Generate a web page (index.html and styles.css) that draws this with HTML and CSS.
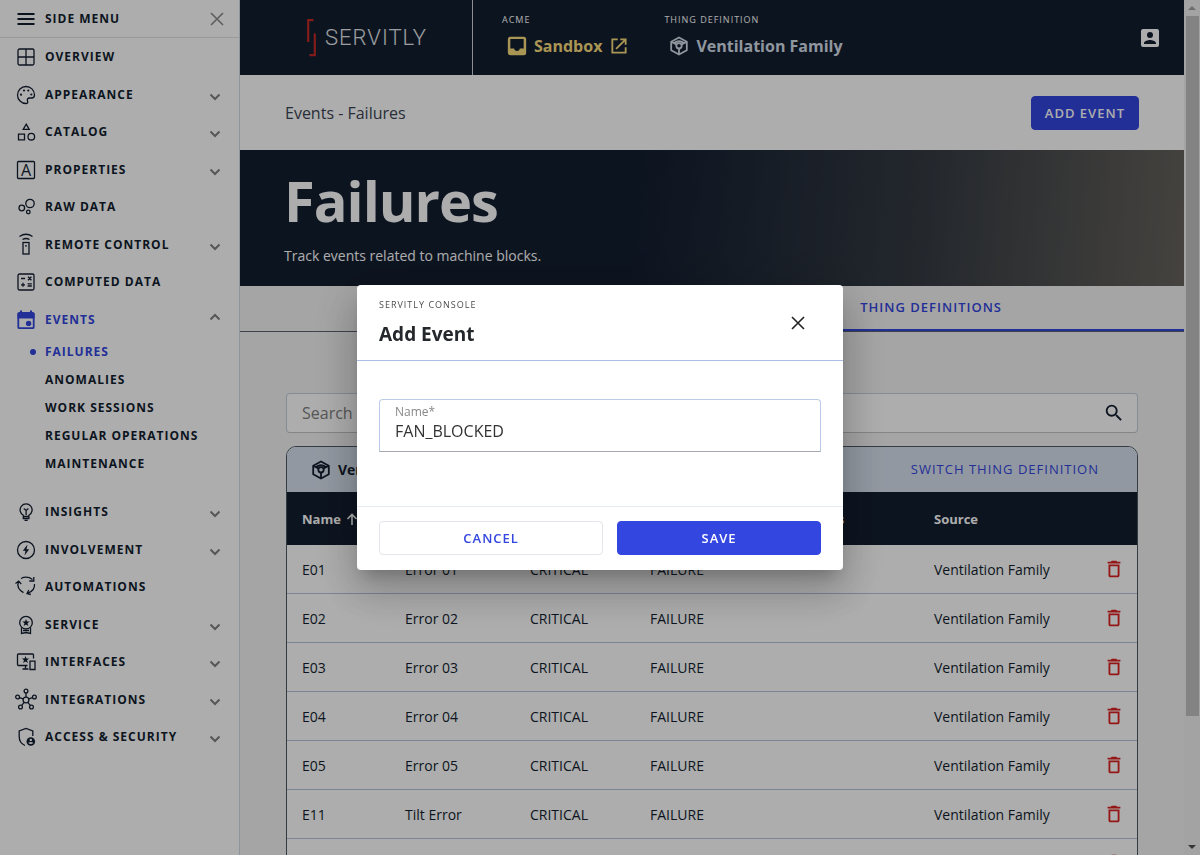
FILE: index.html
```html
<!DOCTYPE html>
<html lang="en">
<head>
  <meta charset="UTF-8">
  <meta name="viewport" content="width=device-width, initial-scale=1">
  <title>Failures - Servitly Console</title>
  <link rel="stylesheet" href="styles.css">
</head>
<body>
  <!-- shared icons -->
  <svg class="sprite" aria-hidden="true">
    <symbol id="chevron" viewBox="0 0 12 12"><path d="M1.500 3.500 6 8l4.500-4.500" fill="none" stroke="currentColor" stroke-width="2"/></symbol>
    <symbol id="close" viewBox="0 0 14 14"><path d="M1 1l12 12M13 1L1 13" fill="none" stroke="currentColor" stroke-width="1.600"/></symbol>
    <symbol id="cube" viewBox="0 0 20 20">
      <g fill="none" stroke="currentColor" stroke-width="1.800" stroke-linejoin="round">
        <path d="M10 1.500l7.800 4.300v8.400L10 18.500l-7.800-4.300V5.800z"/>
        <circle cx="10" cy="9.800" r="2.700"/>
        <path d="M2.500 6l5 2.500M17.500 6l-5 2.500M10 12.500v5.500M5 7Q10 3.500 15 7"/>
      </g>
    </symbol>
    <symbol id="trash" viewBox="0 0 24 24"><path fill="currentColor" fill-rule="evenodd" d="M6 19c0 1.100.9 2 2 2h8c1.100 0 2-.9 2-2V7H6v12zM8 9h8v10H8V9zm7.500-5l-1-1h-5l-1 1H5v2h14V4z"/></symbol>
  </svg>

  <div class="app">
    <nav class="sidebar">
      <div class="sidebar-head">
        <svg class="icon" viewBox="0 0 22 22"><path d="M2.500 6h17M2.500 11h17M2.500 16h17" stroke-width="2"/></svg>
        <span>SIDE MENU</span>
        <button class="sidebar-close" aria-label="Close menu"><svg><use href="#close"/></svg></button>
      </div>
      <ul class="menu">
        <li><a href="#">
          <svg class="icon" viewBox="0 0 22 22"><rect x="3" y="3" width="16" height="16" rx="1.500"/><path d="M11 3v16M3 11h16"/></svg>
          OVERVIEW</a></li>
        <li><a href="#">
          <svg class="icon" viewBox="0 0 22 22"><path d="M11 2.500a8.500 8.500 0 1 0 0 17c1.500 0 2.100-1.100 1.600-2.300-.8-1.800.1-3.200 2-3.200h2.100c1.800 0 2.800-1.300 2.800-3C19.500 6 15.500 2.500 11 2.500z"/><g class="solid"><circle cx="6" cy="10.700" r="1.100"/><circle cx="9" cy="6.500" r="1.100"/><circle cx="13.300" cy="6.500" r="1.100"/><circle cx="16.300" cy="10.500" r="1.100"/></g></svg>
          APPEARANCE<svg class="chevron"><use href="#chevron"/></svg></a></li>
        <li><a href="#">
          <svg class="icon" viewBox="0 0 22 22"><path d="M11.200 3.200l3 5.100h-6zM3.500 13.200h6v5.600h-6z"/><circle cx="16.300" cy="15.700" r="3.300"/></svg>
          CATALOG<svg class="chevron"><use href="#chevron"/></svg></a></li>
        <li><a href="#">
          <svg class="icon" viewBox="0 0 22 22"><rect x="2.500" y="2.500" width="17" height="17" rx="1"/><text x="11" y="17" text-anchor="middle">A</text></svg>
          PROPERTIES<svg class="chevron"><use href="#chevron"/></svg></a></li>
        <li><a href="#">
          <svg class="icon" viewBox="0 0 22 22"><circle cx="15" cy="7.500" r="4.200"/><circle cx="6.800" cy="12" r="2.800"/><circle cx="13.300" cy="16" r="1.800"/></svg>
          RAW DATA</a></li>
        <li><a href="#">
          <svg class="icon" viewBox="0 0 22 22"><rect x="8" y="8.500" width="6" height="11.500"/><path d="M4.500 2.500q6.500-4.500 13 0M7.500 5.500q3.500-2 7 0"/><circle class="solid" cx="11" cy="11.800" r=".9"/></svg>
          REMOTE CONTROL<svg class="chevron"><use href="#chevron"/></svg></a></li>
        <li><a href="#">
          <svg class="icon" viewBox="0 0 22 22"><rect x="3" y="3" width="16" height="16" rx="1.500"/><path d="M6 7.500h4M13 5.800l3.400 3.400M16.400 5.800L13 9.200M6 13.800h4M8 11.800v4M12.600 12.800h4.200M12.600 15h4.200"/></svg>
          COMPUTED DATA</a></li>
        <li class="open"><a href="#">
          <svg class="icon" viewBox="0 0 22 22"><rect x="3.300" y="4" width="15.400" height="15.200" rx="1" stroke-width="1.800"/><path class="solid" d="M2.500 4h17v5.500h-17zM5 1.500h2V5H5zM15 1.500h2V5h-2z"/><circle class="solid" cx="13.600" cy="14.400" r="2.700"/></svg>
          EVENTS<svg class="chevron"><use href="#chevron"/></svg></a>
          <ul class="submenu">
            <li class="current"><a href="#">FAILURES</a></li>
            <li><a href="#">ANOMALIES</a></li>
            <li><a href="#">WORK SESSIONS</a></li>
            <li><a href="#">REGULAR OPERATIONS</a></li>
            <li><a href="#">MAINTENANCE</a></li>
          </ul>
        </li>
        <li><a href="#">
          <svg class="icon" viewBox="0 0 22 22"><path d="M8.300 14.200A6 6 0 1 1 13.900 14.200V17.500H8.300zM8.300 15.500h5.600M11.100 14V9.500M8.800 7.500l2.300 2 2.300-2M9.500 19.300h3.200"/></svg>
          INSIGHTS<svg class="chevron"><use href="#chevron"/></svg></a></li>
        <li><a href="#">
          <svg class="icon" viewBox="0 0 22 22"><circle cx="11" cy="11" r="8.500"/><path class="solid" d="M12.500 5.500l-4.700 6.200h2.700l-1 4.800 4.700-6.300h-2.700z"/></svg>
          INVOLVEMENT<svg class="chevron"><use href="#chevron"/></svg></a></li>
        <li><a href="#">
          <svg class="icon" viewBox="0 0 22 22"><path d="M6 2.500Q12-.5 17.500 3.500M18.800 1v4h-4.500M19.500 8q.5 6.500-6.500 9.200M15.800 18.500L12 17.500l1.800-3.500M8.500 16.600Q1 12.500 3.500 5.500M.5 7.500l3.200-2.400 2.600 3"/></svg>
          AUTOMATIONS</a></li>
        <li><a href="#">
          <svg class="icon" viewBox="0 0 22 22"><circle cx="11" cy="8.700" r="6.300"/><path d="M6.500 13.500v6l4.500-1 4.500 1v-6M8 16.500h6"/><path class="solid" d="M11 5l1 2.600h2.700l-2.200 1.700.9 2.700-2.400-1.600L8.600 12l.9-2.700-2.200-1.700H10z"/></svg>
          SERVICE<svg class="chevron"><use href="#chevron"/></svg></a></li>
        <li><a href="#">
          <svg class="icon" viewBox="0 0 22 22"><path d="M12.500 14.500h-9a1 1 0 0 1-1-1V4a1 1 0 0 1 1-1h14a1 1 0 0 1 1 1v3.500M10.500 14.500v3M7.500 18h6M15 10.200h5v8.300h-5z"/><path class="solid" d="M10.500 5l1 2.600h2.700L12 9.300l.9 2.700-2.400-1.600L8.100 12 9 9.300 6.800 7.600h2.700z"/></svg>
          INTERFACES<svg class="chevron"><use href="#chevron"/></svg></a></li>
        <li><a href="#">
          <svg class="icon" viewBox="0 0 22 22"><circle cx="11" cy="11" r="2.900"/><circle cx="11" cy="2" r="1.900"/><circle cx="2.600" cy="8" r="1.900"/><circle cx="19.400" cy="8" r="1.900"/><circle cx="5.500" cy="18" r="1.900"/><circle cx="16.500" cy="18" r="1.900"/><path d="M11 4v4M4.500 8.600l3.700 1.300M17.500 8.600l-3.700 1.300M6.700 16.400l2.500-3M15.300 16.400l-2.500-3"/></svg>
          INTEGRATIONS<svg class="chevron"><use href="#chevron"/></svg></a></li>
        <li><a href="#">
          <svg class="icon" viewBox="0 0 22 22"><path d="M10 19.500Q4.200 17 4.200 10.500V5L11 2.500 17.800 5v5"/><circle class="solid" cx="15.800" cy="15.500" r="4.300"/><circle class="hole" cx="15.800" cy="13.900" r="1.200"/><path class="hole" d="M13.200 17q2.600-2 5.200 0-2.600 2-5.200 0z"/></svg>
          ACCESS &amp; SECURITY<svg class="chevron"><use href="#chevron"/></svg></a></li>
      </ul>
    </nav>

    <div class="main">
      <header class="topbar">
        <a class="logo" href="#">
          <svg viewBox="0 0 12 38"><path d="M7.500 1.200H2.200V23M3.500 36.200h5.300V14.500" fill="none" stroke="currentColor" stroke-width="2.200"/></svg>
          <span>SERVITLY</span>
        </a>
        <div class="context">
          <span class="context-label">ACME</span>
          <a class="context-value tenant" href="#">
            <svg viewBox="0 0 24 24"><path fill="currentColor" fill-rule="evenodd" d="M4 1h16a3 3 0 0 1 3 3v16a3 3 0 0 1-3 3H4a3 3 0 0 1-3-3V4a3 3 0 0 1 3-3zm0 2.500V15h4.500q.5 3 3.500 3t3.500-3H20V3.500z"/></svg>
            Sandbox
            <svg viewBox="0 0 24 24"><path d="M10.500 4H4v16h16v-6.500M13.500 4H20v6.500M20 4L8.500 15.500" fill="none" stroke="currentColor" stroke-width="2.200"/></svg>
          </a>
        </div>
        <div class="context">
          <span class="context-label">THING DEFINITION</span>
          <a class="context-value" href="#"><svg><use href="#cube"/></svg>Ventilation Family</a>
        </div>
        <button class="account" aria-label="Account">
          <svg viewBox="0 0 24 24"><path fill="currentColor" fill-rule="evenodd" d="M3 5v14a2 2 0 0 0 2 2h14a2 2 0 0 0 2-2V5a2 2 0 0 0-2-2H5a2 2 0 0 0-2 2zm12 4a3 3 0 1 1-6 0 3 3 0 0 1 6 0zm-9 8c0-2 4-3.100 6-3.100s6 1.100 6 3.100v1H6v-1z"/></svg>
        </button>
      </header>

      <div class="toolbar">
        <span class="breadcrumb">Events - Failures</span>
        <button class="btn btn-primary btn-add">ADD EVENT</button>
      </div>

      <section class="banner">
        <h1>Failures</h1>
        <p>Track events related to machine blocks.</p>
      </section>

      <div class="tabs">
        <a class="tab active" href="#">THING DEFINITIONS</a>
      </div>

      <div class="content">
        <div class="search">
          <input type="search" placeholder="Search" aria-label="Search">
          <svg viewBox="0 0 24 24"><path fill="currentColor" d="M15.500 14h-.79l-.28-.27A6.471 6.471 0 0 0 16 9.500 6.500 6.500 0 1 0 9.500 16c1.610 0 3.090-.59 4.230-1.570l.27.28v.79l5 4.990L20.490 19l-4.990-5zm-6 0C7.010 14 5 11.990 5 9.500S7.010 5 9.500 5 14 7.010 14 9.500 11.990 14 9.500 14z"/></svg>
        </div>

        <div class="card">
          <div class="card-head">
            <svg><use href="#cube"/></svg>
            <strong>Ventilation Family</strong>
            <a href="#">SWITCH THING DEFINITION</a>
          </div>
          <table>
            <colgroup>
              <col class="col-name"><col class="col-desc"><col class="col-severity"><col class="col-type"><col class="col-tags"><col><col class="col-action">
            </colgroup>
            <thead>
              <tr><th>Name <svg class="sort" viewBox="0 0 12 12"><path d="M6 12V1.500M1.500 6L6 1.500 10.500 6" fill="none" stroke="currentColor" stroke-width="1.600"/></svg></th><th>Description</th><th>Severity</th><th>Type</th><th>Tags</th><th>Source</th><th></th></tr>
            </thead>
            <tbody>
              <tr><td>E01</td><td>Error 01</td><td>CRITICAL</td><td>FAILURE</td><td></td><td>Ventilation Family</td><td><button class="delete" aria-label="Delete E01"><svg><use href="#trash"/></svg></button></td></tr>
              <tr><td>E02</td><td>Error 02</td><td>CRITICAL</td><td>FAILURE</td><td></td><td>Ventilation Family</td><td><button class="delete" aria-label="Delete E02"><svg><use href="#trash"/></svg></button></td></tr>
              <tr><td>E03</td><td>Error 03</td><td>CRITICAL</td><td>FAILURE</td><td></td><td>Ventilation Family</td><td><button class="delete" aria-label="Delete E03"><svg><use href="#trash"/></svg></button></td></tr>
              <tr><td>E04</td><td>Error 04</td><td>CRITICAL</td><td>FAILURE</td><td></td><td>Ventilation Family</td><td><button class="delete" aria-label="Delete E04"><svg><use href="#trash"/></svg></button></td></tr>
              <tr><td>E05</td><td>Error 05</td><td>CRITICAL</td><td>FAILURE</td><td></td><td>Ventilation Family</td><td><button class="delete" aria-label="Delete E05"><svg><use href="#trash"/></svg></button></td></tr>
              <tr><td>E11</td><td>Tilt Error</td><td>CRITICAL</td><td>FAILURE</td><td></td><td>Ventilation Family</td><td><button class="delete" aria-label="Delete E11"><svg><use href="#trash"/></svg></button></td></tr>
              <tr><td>&nbsp;</td><td></td><td></td><td></td><td></td><td></td><td><button class="delete" aria-label="Delete"><svg><use href="#trash"/></svg></button></td></tr>
            </tbody>
          </table>
        </div>
      </div>
    </div>

    <div class="scrollbar" aria-hidden="true">
      <span class="arrow up"></span>
      <div class="track"><div class="thumb"></div></div>
      <span class="arrow down"></span>
    </div>
  </div>

  <div class="backdrop">
    <form class="dialog" role="dialog" aria-labelledby="dialog-title">
      <div class="dialog-head">
        <div>
          <p>SERVITLY CONSOLE</p>
          <h2 id="dialog-title">Add Event</h2>
        </div>
        <button type="button" class="dialog-close" aria-label="Close"><svg><use href="#close"/></svg></button>
      </div>
      <div class="dialog-body">
        <div class="field">
          <label for="name">Name*</label>
          <input type="text" id="name" value="FAN_BLOCKED">
        </div>
      </div>
      <div class="dialog-foot">
        <button type="button" class="btn btn-outline">CANCEL</button>
        <button type="button" class="btn btn-primary">SAVE</button>
      </div>
    </form>
  </div>
</body>
</html>
```
FILE: styles.css
```css
* {
  box-sizing: border-box;
}

body {
  margin: 0;
  font-family: "Open Sans", sans-serif;
  font-size: 14px;
  line-height: 1.5;
  color: #131e30;
  overflow: hidden;
}

a {
  color: inherit;
  text-decoration: none;
}

button {
  font-family: inherit;
  cursor: pointer;
}

.sprite {
  display: none;
}

.app {
  display: flex;
  height: 100vh;
}

/* sidebar */
.sidebar {
  flex: 0 0 240px;
  background: #fff;
  border-right: 1px solid #d5dbe8;
  font-size: 12px;
  font-weight: 700;
  letter-spacing: 1px;
}

.sidebar-head {
  display: flex;
  align-items: center;
  gap: 8px;
  height: 38px;
  padding: 0 15px;
  border-bottom: 1px solid #e4e4e4;
}

.sidebar-close {
  margin-left: auto;
  padding: 0;
  border: 0;
  background: none;
  color: #8a8a8a;
}

.sidebar-close svg {
  display: block;
  width: 14px;
  height: 14px;
}

.menu, .submenu {
  list-style: none;
  margin: 0;
  padding: 0;
}

.menu > li > a {
  display: flex;
  align-items: center;
  gap: 8px;
  height: 37px;
  padding: 0 18px 0 15px;
}

.menu > li:nth-child(odd) > a {
  height: 38px;
}

.icon {
  flex: none;
  width: 22px;
  height: 22px;
  fill: none;
  stroke: currentColor;
  stroke-width: 1.3;
  overflow: visible;
}

.icon .solid {
  fill: currentColor;
  stroke: none;
}

.icon .hole {
  fill: #fff;
  stroke: none;
}

.icon text {
  font-size: 16px;
  font-weight: 400;
  letter-spacing: 0;
  fill: currentColor;
  stroke: none;
}

.chevron {
  width: 12px;
  height: 12px;
  margin: 4px 0 0 auto;
  color: #808080;
}

.open > a, .current a {
  color: #3346df;
}

.open > a .chevron {
  transform: rotate(180deg);
  margin: 0 0 6px auto;
}

.submenu {
  padding-bottom: 15px;
}

.submenu a {
  display: block;
  padding: 4px 0 4px 45px;
  line-height: 20px;
}

.current a {
  position: relative;
}

.current a::before {
  content: "";
  position: absolute;
  left: 30px;
  top: 11px;
  width: 6px;
  height: 6px;
  border-radius: 50%;
  background: #3346df;
}

/* main column */
.main {
  flex: 1;
  min-width: 0;
  overflow: hidden;
  background: #f3f3f3;
}

.topbar {
  display: flex;
  height: 75px;
  background: #131e30;
  color: #fff;
}

.logo {
  display: flex;
  align-items: center;
  gap: 7px;
  width: 233px;
  padding-left: 66px;
  border-right: 1px solid #d0d4d8;
  font-family: "Roboto", sans-serif;
  font-size: 22px;
  font-weight: 300;
  letter-spacing: 1px;
  color: #e4e6ea;
}

.logo svg {
  width: 12px;
  height: 38px;
  color: #c02a26;
}

.context {
  padding: 12px 0 0 29px;
}

.context + .context {
  padding-left: 35px;
}

.context-label {
  display: block;
  font-size: 9px;
  line-height: 16px;
  letter-spacing: 1px;
}

.context-value {
  display: flex;
  align-items: center;
  gap: 7px;
  padding: 6px 0 0 5px;
  font-size: 16px;
  font-weight: 700;
  line-height: 24px;
  color: #d5dde8;
}

.context-value svg {
  width: 20px;
  height: 20px;
}

.tenant {
  color: #fbdd7d;
}

.account {
  margin: 0 22px 0 auto;
  padding: 0;
  border: 0;
  background: none;
  color: #fff;
}

.account svg {
  display: block;
  width: 24px;
  height: 24px;
}

.toolbar {
  display: flex;
  align-items: center;
  justify-content: space-between;
  height: 75px;
  padding: 0 45px;
  background: #fff;
}

.breadcrumb {
  font-size: 16px;
  color: #3c4554;
}

.btn {
  height: 34px;
  padding: 0 13px;
  border: 1px solid #3346df;
  border-radius: 4px;
  font-size: 13px;
  font-weight: 600;
  letter-spacing: 1px;
}

.btn-primary {
  background: #3346df;
  color: #fff;
}

.btn-outline {
  background: #fff;
  border-color: #e4e4ea;
  color: #3346df;
}

.banner {
  height: 136px;
  padding: 16px 44px 0;
  background: linear-gradient(95deg, #131e30 42%, #353b43 72%, #67635d);
  color: #fff;
}

.banner h1 {
  margin: 0 0 12px;
  font-size: 56px;
  font-weight: 700;
  line-height: 68px;
  letter-spacing: -1px;
}

.banner p {
  margin: 0;
  line-height: 20px;
}

.tabs {
  display: grid;
  grid-template-columns: 13fr 15fr;
  height: 46px;
  border-bottom: 1px solid #5b6270;
}

.tab {
  grid-column: 2;
  border-bottom: 2px solid #3346df;
  font-size: 13px;
  font-weight: 600;
  line-height: 43px;
  letter-spacing: 1px;
  text-align: center;
  color: #3346df;
}

.content {
  padding: 61px 46px 0;
}

.search {
  display: flex;
  align-items: center;
  height: 40px;
  margin-bottom: 13px;
  padding: 0 12px 0 15px;
  background: #fff;
  border: 1px solid #c3cfe0;
  border-bottom-color: #c4c4c4;
  border-radius: 4px;
}

.search input {
  flex: 1;
  padding: 0;
  border: 0;
  outline: 0;
  background: none;
  font: inherit;
  font-size: 16px;
}

.search input::placeholder {
  color: #808080;
}

.search svg {
  width: 22px;
  height: 22px;
}

/* events table */
.card {
  background: #fff;
  border: 1px solid #4e5663;
  border-radius: 10px;
  overflow: hidden;
}

.card-head {
  display: flex;
  align-items: center;
  gap: 7px;
  height: 45px;
  padding: 0 38px 0 24px;
  background: #d7e1ee;
}

.card-head svg {
  width: 20px;
  height: 20px;
}

.card-head a {
  margin-left: auto;
  font-size: 13px;
  font-weight: 500;
  letter-spacing: 1px;
  color: #3346df;
}

table {
  width: 100%;
  table-layout: fixed;
  border-collapse: collapse;
}

.col-name { width: 103px; }
.col-desc { width: 125px; }
.col-severity { width: 120px; }
.col-type { width: 165px; }
.col-tags { width: 119px; }
.col-action { width: 47px; }

th, td {
  padding: 14px 0 13px 15px;
  text-align: left;
  white-space: nowrap;
}

th {
  padding: 17px 0 16px 15px;
  background: #131e30;
  color: #fff;
  font-size: 13px;
  font-weight: 700;
  line-height: 20px;
}

.sort {
  width: 12px;
  height: 12px;
  margin-left: 2px;
  vertical-align: -1px;
}

tbody tr {
  border-bottom: 1px solid #b4c3da;
}

td:last-child {
  padding: 0;
}

.delete {
  display: block;
  margin: 0 0 0 13px;
  padding: 0;
  border: 0;
  background: none;
  color: #dc2320;
}

.delete svg {
  display: block;
  width: 22px;
  height: 22px;
}

/* page scrollbar */
.scrollbar {
  display: flex;
  flex-direction: column;
  align-items: center;
  flex: 0 0 16px;
  background: #f1f1f1;
}

.track {
  flex: 1;
  width: 13px;
}

.thumb {
  height: 85%;
  background: #c1c1c1;
}

.arrow {
  width: 0;
  margin: 6px 0;
  border: 4px solid transparent;
}

.up {
  border-top: 0;
  border-bottom-color: #a3a3a3;
}

.down {
  border-bottom: 0;
  border-top-color: #505050;
}

/* dialog */
.backdrop {
  position: fixed;
  inset: 0;
  display: flex;
  align-items: center;
  justify-content: center;
  background: rgba(0, 0, 0, 0.32);
}

.dialog {
  width: 486px;
  background: #fff;
  border-radius: 4px;
  box-shadow: 0 11px 15px -7px rgba(0, 0, 0, 0.2), 0 24px 38px 3px rgba(0, 0, 0, 0.14), 0 9px 46px 8px rgba(0, 0, 0, 0.12);
}

.dialog-head {
  display: flex;
  align-items: center;
  justify-content: space-between;
  padding: 12px 38px 12px 22px;
  border-bottom: 1px solid #a9bfe6;
}

.dialog-head p {
  margin: 0 0 8px;
  font-size: 9px;
  line-height: 16px;
  letter-spacing: 1px;
  color: #4d4d4d;
}

.dialog-head h2 {
  margin: 0;
  font-size: 19px;
  font-weight: 700;
  line-height: 27px;
  color: #24272b;
}

.dialog-close {
  padding: 0;
  border: 0;
  background: none;
  color: #222;
}

.dialog-close svg {
  display: block;
  width: 14px;
  height: 14px;
}

.dialog-body {
  padding: 38px 22px 54px;
}

.field {
  padding: 3px 15px 9px;
  border: 1px solid #bccbe8;
  border-bottom-color: #a6a9b0;
  border-radius: 4px 4px 0 0;
}

.field label {
  display: block;
  font-size: 12px;
  line-height: 17px;
  color: #888;
}

.field input {
  display: block;
  width: 100%;
  height: 22px;
  padding: 0;
  border: 0;
  outline: 0;
  font: inherit;
  font-size: 16px;
  color: #333;
}

.dialog-foot {
  display: grid;
  grid-template-columns: 11fr 10fr;
  gap: 14px;
  padding: 14px 22px 15px;
  border-top: 1px solid #e6edf5;
}
```
